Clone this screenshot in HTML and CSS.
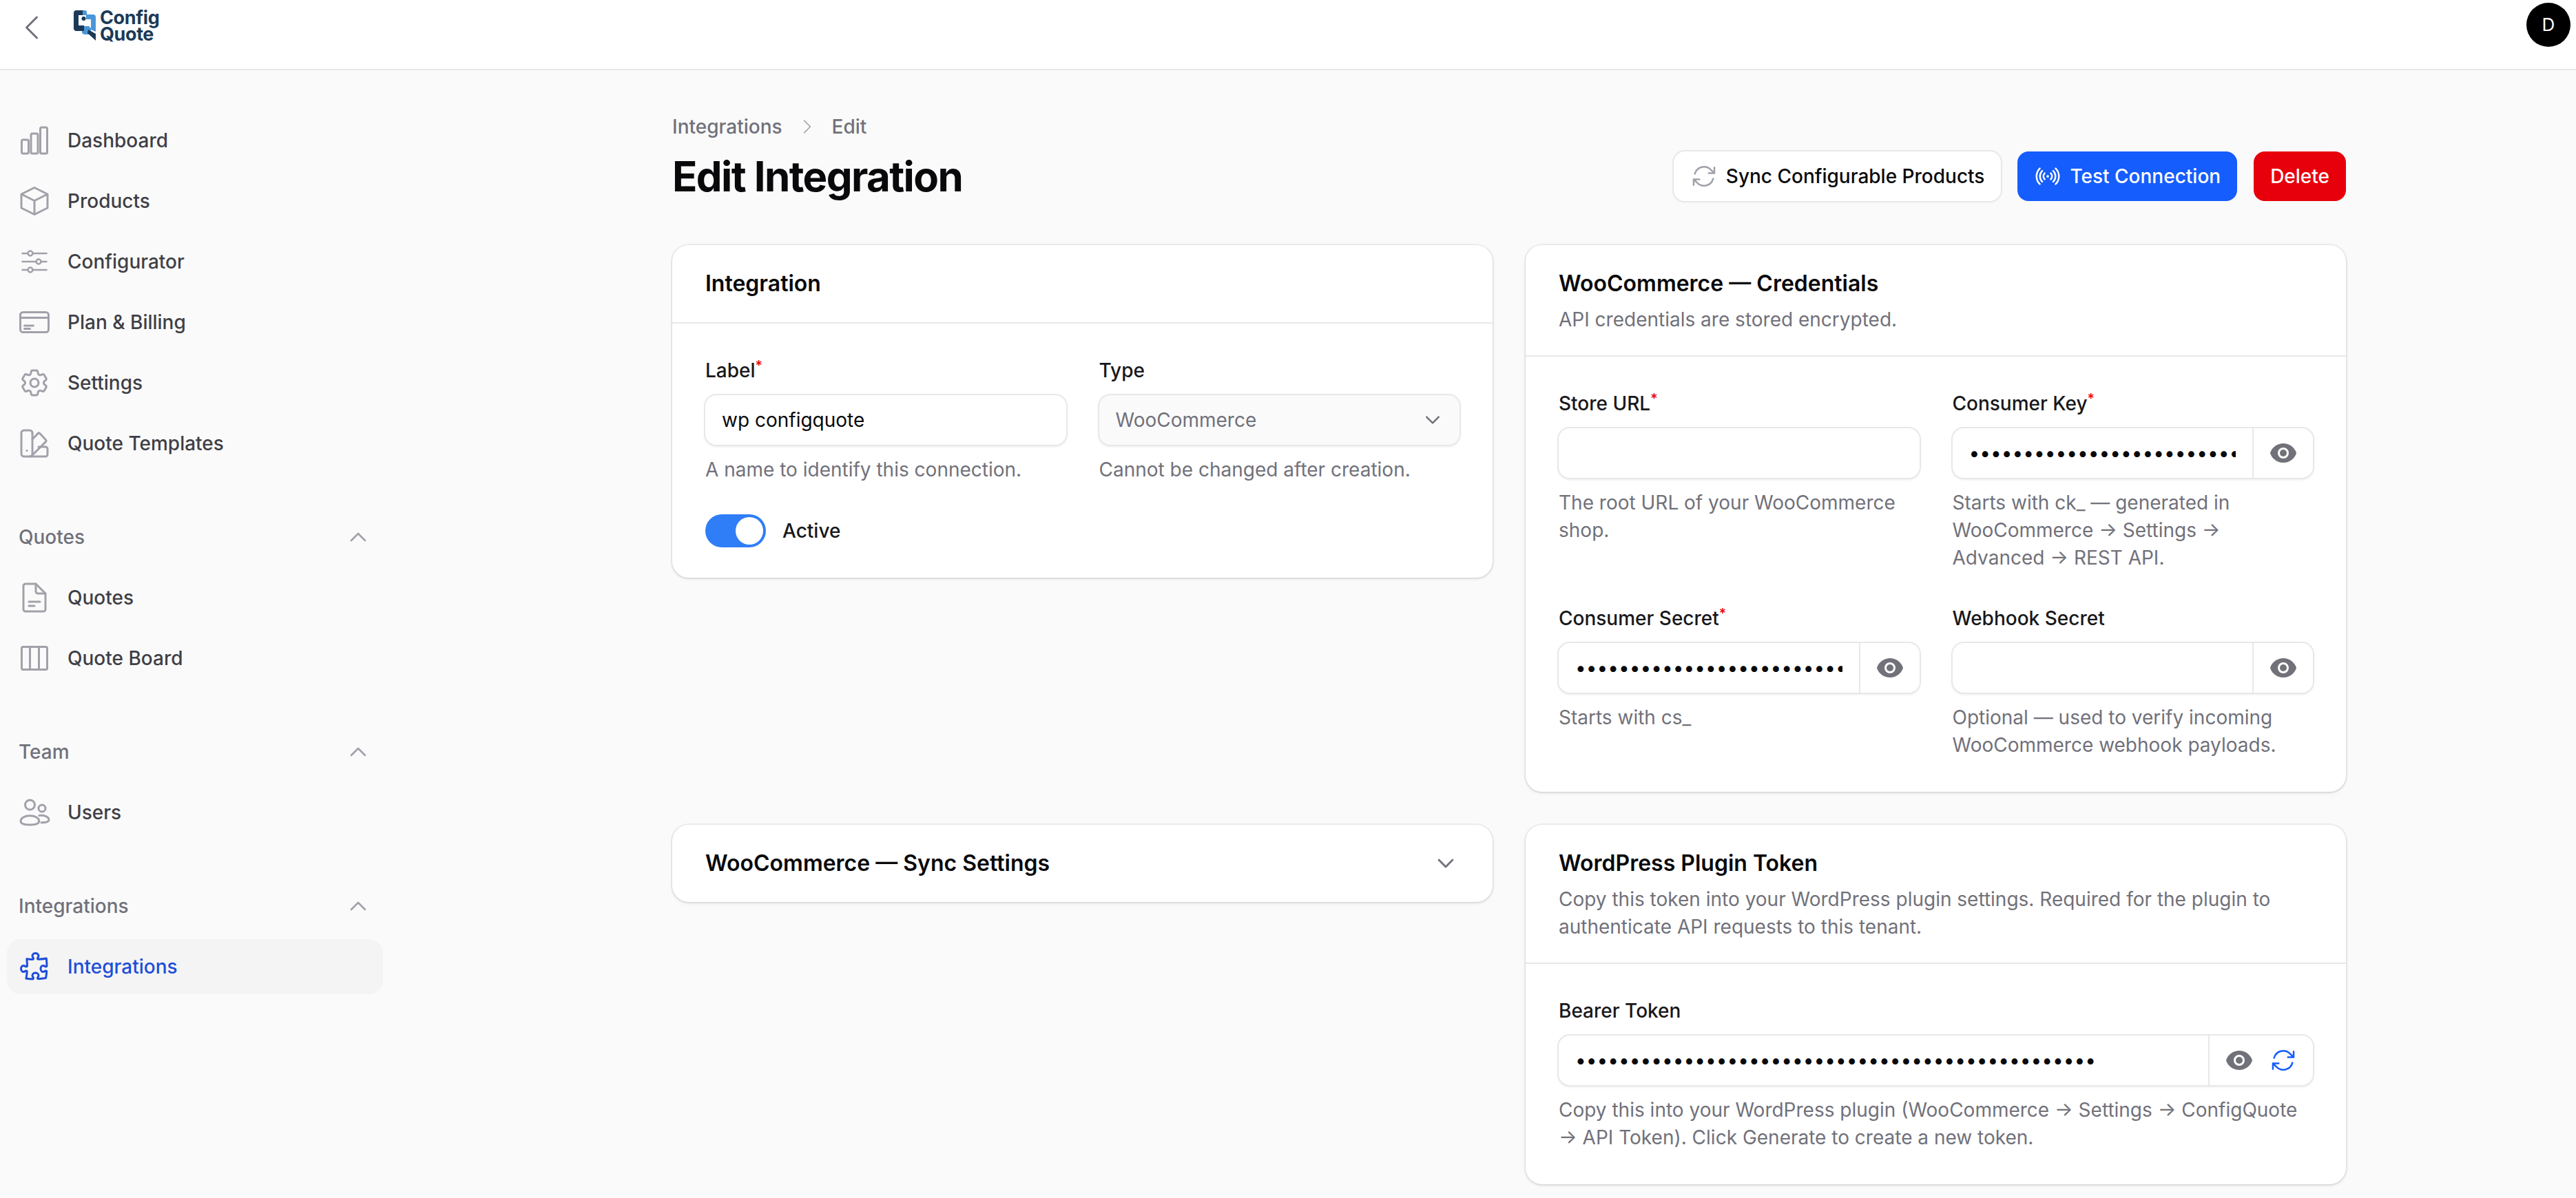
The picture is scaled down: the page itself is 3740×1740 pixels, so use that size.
FILE: index.html
```html
<!DOCTYPE html>
<html lang="en">
<head>
    <meta charset="UTF-8">
    <meta name="viewport" content="width=device-width, initial-scale=1.0">
    <title>Edit Integration</title>
    <link rel="stylesheet" href="styles.css">
</head>
<body>
    <svg class="defs" width="0" height="0">
        <symbol id="eye" viewBox="0 0 20 20">
            <path d="M10 12.5a2.5 2.5 0 1 0 0-5 2.5 2.5 0 0 0 0 5Z"/>
            <path fill-rule="evenodd" d="M.664 10.59a1.651 1.651 0 0 1 0-1.186A10.004 10.004 0 0 1 10 3c4.257 0 7.893 2.66 9.336 6.41.147.381.146.804 0 1.186A10.004 10.004 0 0 1 10 17c-4.257 0-7.893-2.66-9.336-6.41ZM14 10a4 4 0 1 1-8 0 4 4 0 0 1 8 0Z"/>
        </symbol>
        <symbol id="chevron-up" viewBox="0 0 24 24">
            <path d="m4.5 15.75 7.5-7.5 7.5 7.5" fill="none" stroke="currentColor" stroke-width="2" stroke-linecap="round" stroke-linejoin="round"/>
        </symbol>
        <symbol id="chevron-down" viewBox="0 0 24 24">
            <path d="m5 8.5 7 7 7-7" fill="none" stroke="currentColor" stroke-width="2" stroke-linecap="round" stroke-linejoin="round"/>
        </symbol>
        <symbol id="arrow-path" viewBox="0 0 24 24">
            <path d="M16.023 9.348h4.992v-.001M2.985 19.644v-4.992m0 0h4.992m-4.993 0 3.181 3.183a8.25 8.25 0 0 0 13.803-3.7M4.031 9.865a8.25 8.25 0 0 1 13.803-3.7l3.181 3.182m0-4.991v4.99" fill="none" stroke="currentColor" stroke-width="1.5" stroke-linecap="round" stroke-linejoin="round"/>
        </symbol>
    </svg>

    <header class="topbar">
        <div class="topbar-left">
            <svg class="back-icon" viewBox="0 0 24 24" fill="none" stroke="currentColor" stroke-width="1.5" stroke-linecap="round" stroke-linejoin="round"><path d="M15.75 19.5 8.25 12l7.5-7.5"/></svg>
            <div class="logo">
                <svg class="logo-mark" viewBox="0 0 34 46">
                    <path fill="#4a96d9" d="M13 1h4a3 3 0 0 1 3 3v3h9a4 4 0 0 1 4 4v21l-7-3V14H19V8h-6z"/>
                    <path fill="#4a96d9" d="M13 24h10l3 3v9H17a4 4 0 0 1-4-4z"/>
                    <path fill="#1b3a57" d="M5 1h9v7H8v15h8v8H5a4 4 0 0 1-4-4V5a4 4 0 0 1 4-4Z"/>
                    <circle fill="#1b3a57" cx="15.5" cy="13" r="3"/>
                    <path fill="#1b3a57" d="M22 29 33 35v10L21 34z"/>
                </svg>
                <div class="logo-text">Config<br>Quote</div>
            </div>
        </div>
        <div class="avatar">D</div>
    </header>

    <div class="layout">
        <aside class="sidebar">
            <nav class="nav-group">
                <a class="nav-item">
                    <svg class="nav-icon" viewBox="0 0 24 24" fill="none" stroke="currentColor" stroke-width="1.5" stroke-linejoin="round"><rect x="2.75" y="11.5" width="5" height="10" rx="1"/><rect x="9.5" y="7" width="5" height="14.5" rx="1"/><rect x="16.25" y="2.5" width="5" height="19" rx="1"/></svg>
                    Dashboard
                </a>
                <a class="nav-item">
                    <svg class="nav-icon" viewBox="0 0 24 24" fill="none" stroke="currentColor" stroke-width="1.5" stroke-linejoin="round"><path d="M12 2.25 21.5 7v10L12 21.75 2.5 17V7Z"/><path d="m2.5 7 9.5 4.75L21.5 7M12 11.75v10"/></svg>
                    Products
                </a>
                <a class="nav-item">
                    <svg class="nav-icon" viewBox="0 0 24 24" fill="none" stroke="currentColor" stroke-width="1.25" stroke-linecap="round"><path d="M3.25 6h4M10.75 6h10M3.25 12h10M16.75 12h4M3.25 18h4M10.75 18h10"/><circle cx="9" cy="6" r="1.7"/><circle cx="15" cy="12" r="1.7"/><circle cx="9" cy="18" r="1.7"/></svg>
                    Configurator
                </a>
                <a class="nav-item">
                    <svg class="nav-icon" viewBox="0 0 24 24" fill="none" stroke="currentColor" stroke-width="1.5" stroke-linecap="round" stroke-linejoin="round"><rect x="1.75" y="4.75" width="20.5" height="14.5" rx="2"/><path d="M1.75 8.75h20.5M4.75 14.5h6.5M4.75 16.75h4"/></svg>
                    Plan &amp; Billing
                </a>
                <a class="nav-item">
                    <svg class="nav-icon" viewBox="0 0 24 24" fill="none" stroke="currentColor" stroke-width="1.5" stroke-linecap="round" stroke-linejoin="round"><path d="M9.594 3.94c.09-.542.56-.94 1.11-.94h2.593c.55 0 1.02.398 1.11.94l.213 1.281c.063.374.313.686.645.87.074.04.147.083.22.127.325.196.72.257 1.075.124l1.217-.456a1.125 1.125 0 0 1 1.37.49l1.296 2.247a1.125 1.125 0 0 1-.26 1.431l-1.003.827c-.293.241-.438.613-.43.992a7.723 7.723 0 0 1 0 .255c-.008.378.137.75.43.991l1.004.827c.424.35.534.955.26 1.43l-1.298 2.247a1.125 1.125 0 0 1-1.369.491l-1.217-.456c-.355-.133-.75-.072-1.076.124a6.47 6.47 0 0 1-.22.128c-.331.183-.581.495-.644.869l-.213 1.281c-.09.543-.56.94-1.11.94h-2.594c-.55 0-1.019-.398-1.11-.94l-.213-1.281c-.062-.374-.312-.686-.644-.87a6.52 6.52 0 0 1-.22-.127c-.325-.196-.72-.257-1.076-.124l-1.217.456a1.125 1.125 0 0 1-1.369-.49l-1.297-2.247a1.125 1.125 0 0 1 .26-1.431l1.004-.827c.292-.24.437-.613.43-.991a6.932 6.932 0 0 1 0-.255c.007-.38-.138-.751-.43-.992l-1.004-.827a1.125 1.125 0 0 1-.26-1.43l1.297-2.247a1.125 1.125 0 0 1 1.37-.491l1.216.456c.356.133.751.072 1.076-.124.072-.044.146-.086.22-.128.332-.183.582-.495.644-.869l.214-1.28Z"/><path d="M15 12a3 3 0 1 1-6 0 3 3 0 0 1 6 0Z"/></svg>
                    Settings
                </a>
                <a class="nav-item">
                    <svg class="nav-icon" viewBox="0 0 24 24" fill="none" stroke="currentColor" stroke-width="1.5" stroke-linecap="round" stroke-linejoin="round"><path d="M10.5 4.5a2 2 0 0 0-2-2h-4a2 2 0 0 0-2 2v15a2 2 0 0 0 2 2H20a1.5 1.5 0 0 0 1.5-1.5v-4a1.5 1.5 0 0 0-1.5-1.5h-5"/><path d="M10.5 4.5v15a2 2 0 0 1-2 2"/><path d="m10.5 9 4-4.2a1 1 0 0 1 1.4 0l4.3 4.6a1 1 0 0 1 0 1.4L10 21"/><path d="M6.5 17.2h.01"/></svg>
                    Quote Templates
                </a>
            </nav>

            <nav class="nav-group">
                <div class="nav-label">Quotes <svg class="label-chevron"><use href="#chevron-up"/></svg></div>
                <a class="nav-item">
                    <svg class="nav-icon" viewBox="0 0 24 24" fill="none" stroke="currentColor" stroke-width="1.5" stroke-linecap="round" stroke-linejoin="round"><path d="M13 2H5.5A1.5 1.5 0 0 0 4 3.5v17A1.5 1.5 0 0 0 5.5 22h13a1.5 1.5 0 0 0 1.5-1.5V9Z"/><path d="M13 2v5.5A1.5 1.5 0 0 0 14.5 9H20M8 15h8M8 18h4"/></svg>
                    Quotes
                </a>
                <a class="nav-item">
                    <svg class="nav-icon" viewBox="0 0 24 24" fill="none" stroke="currentColor" stroke-width="1.5" stroke-linejoin="round"><rect x="2.75" y="3.75" width="18.5" height="16.5" rx="1"/><path d="M8.75 3.75v16.5M15.25 3.75v16.5"/></svg>
                    Quote Board
                </a>
            </nav>

            <nav class="nav-group">
                <div class="nav-label">Team <svg class="label-chevron"><use href="#chevron-up"/></svg></div>
                <a class="nav-item">
                    <svg class="nav-icon" viewBox="0 0 24 24" fill="none" stroke="currentColor" stroke-width="1.5" stroke-linecap="round" stroke-linejoin="round"><circle cx="8.75" cy="6.5" r="3.5"/><circle cx="17.5" cy="9" r="2.5"/><path d="M2 18.3c0-2.3 3-3.9 6.7-3.9s6.7 1.6 6.7 3.9-3 2.7-6.7 2.7S2 20.6 2 18.3Z"/><path d="M15.5 14.3c3.5-.6 7 .9 7 3.1 0 1.4-2.2 2-5.5 2"/></svg>
                    Users
                </a>
            </nav>

            <nav class="nav-group">
                <div class="nav-label">Integrations <svg class="label-chevron"><use href="#chevron-up"/></svg></div>
                <a class="nav-item active">
                    <svg class="nav-icon" viewBox="0 0 24 24" fill="none" stroke="currentColor" stroke-width="1.5" stroke-linecap="round" stroke-linejoin="round"><path d="M14.25 6.087c0-.355.186-.676.401-.959.221-.29.349-.634.349-1.003 0-1.036-1.007-1.875-2.25-1.875s-2.25.84-2.25 1.875c0 .369.128.713.349 1.003.215.283.401.604.401.959v0a.64.64 0 0 1-.657.643 48.39 48.39 0 0 1-4.163-.3c.186 1.613.293 3.25.315 4.907a.656.656 0 0 1-.658.663v0c-.355 0-.676-.186-.959-.401a1.647 1.647 0 0 0-1.003-.349c-1.036 0-1.875 1.007-1.875 2.25s.84 2.25 1.875 2.25c.369 0 .713-.128 1.003-.349.283-.215.604-.401.959-.401v0c.31 0 .555.26.532.57a48.039 48.039 0 0 1-.642 5.056c1.518.19 3.058.309 4.616.354a.64.64 0 0 0 .657-.643v0c0-.355-.186-.676-.401-.959a1.647 1.647 0 0 1-.349-1.003c0-1.035 1.008-1.875 2.25-1.875 1.243 0 2.25.84 2.25 1.875 0 .369-.128.713-.349 1.003-.215.283-.4.604-.4.959v0c0 .333.277.599.61.58a48.1 48.1 0 0 0 5.427-.63 48.05 48.05 0 0 0 .582-4.717.532.532 0 0 0-.533-.57v0c-.355 0-.676.186-.959.401-.29.221-.634.349-1.003.349-1.035 0-1.875-1.007-1.875-2.25s.84-2.25 1.875-2.25c.37 0 .713.128 1.003.349.283.215.604.401.96.401v0a.656.656 0 0 0 .658-.663 48.422 48.422 0 0 0-.37-5.36c-1.886.342-3.81.574-5.766.689a.578.578 0 0 1-.61-.58v0Z"/></svg>
                    Integrations
                </a>
            </nav>
        </aside>

        <main class="main">
            <div class="page-head">
                <div>
                    <div class="breadcrumbs">
                        <span>Integrations</span>
                        <svg class="crumb-chevron" viewBox="0 0 24 24" fill="none" stroke="currentColor" stroke-width="1.5" stroke-linecap="round" stroke-linejoin="round"><path d="m8.25 4.5 7.5 7.5-7.5 7.5"/></svg>
                        <span>Edit</span>
                    </div>
                    <h1>Edit Integration</h1>
                </div>
                <div class="actions">
                    <button class="btn btn-white"><svg class="btn-icon grey"><use href="#arrow-path"/></svg>Sync Configurable Products</button>
                    <button class="btn btn-blue">
                        <svg class="btn-icon" viewBox="0 0 24 24" fill="none" stroke="currentColor" stroke-width="1.5" stroke-linecap="round" stroke-linejoin="round"><path d="M9.348 14.652a3.75 3.75 0 0 1 0-5.304m5.304 0a3.75 3.75 0 0 1 0 5.304m-7.425 2.121a6.75 6.75 0 0 1 0-9.546m9.546 0a6.75 6.75 0 0 1 0 9.546M5.106 18.894c-3.808-3.807-3.808-9.98 0-13.788m13.788 0c3.808 3.807 3.808 9.98 0 13.788M12 12h.008v.008H12V12Zm.375 0a.375.375 0 1 1-.75 0 .375.375 0 0 1 .75 0Z"/></svg>
                        Test Connection
                    </button>
                    <button class="btn btn-red">Delete</button>
                </div>
            </div>

            <div class="cards">
                <section class="card">
                    <div class="card-head">
                        <h2>Integration</h2>
                    </div>
                    <div class="card-body card-body-tight">
                        <div class="field-grid">
                            <div class="field">
                                <label>Label<sup>*</sup></label>
                                <div class="input-wrap"><input type="text" value="wp configquote"></div>
                                <p class="help">A name to identify this connection.</p>
                            </div>
                            <div class="field">
                                <label>Type</label>
                                <div class="input-wrap select">
                                    <span>WooCommerce</span>
                                    <svg class="select-chevron"><use href="#chevron-down"/></svg>
                                </div>
                                <p class="help">Cannot be changed after creation.</p>
                            </div>
                        </div>
                        <div class="toggle-row">
                            <span class="toggle"><span class="knob"></span></span>
                            <span class="toggle-label">Active</span>
                        </div>
                    </div>
                </section>

                <section class="card">
                    <div class="card-head">
                        <h2>WooCommerce — Credentials</h2>
                        <p class="sub">API credentials are stored encrypted.</p>
                    </div>
                    <div class="card-body">
                        <div class="field-grid">
                            <div class="field">
                                <label>Store URL<sup>*</sup></label>
                                <div class="input-wrap"><input type="text"></div>
                                <p class="help">The root URL of your WooCommerce shop.</p>
                            </div>
                            <div class="field">
                                <label>Consumer Key<sup>*</sup></label>
                                <div class="input-wrap">
                                    <input type="password" value="ck_0000000000000000000000000000000000000000">
                                    <div class="suffix"><svg class="eye"><use href="#eye"/></svg></div>
                                </div>
                                <p class="help">Starts with ck_ — generated in WooCommerce → Settings → Advanced → REST API.</p>
                            </div>
                            <div class="field">
                                <label>Consumer Secret<sup>*</sup></label>
                                <div class="input-wrap">
                                    <input type="password" value="cs_0000000000000000000000000000000000000000">
                                    <div class="suffix"><svg class="eye"><use href="#eye"/></svg></div>
                                </div>
                                <p class="help">Starts with cs_</p>
                            </div>
                            <div class="field">
                                <label>Webhook Secret</label>
                                <div class="input-wrap">
                                    <input type="password">
                                    <div class="suffix"><svg class="eye"><use href="#eye"/></svg></div>
                                </div>
                                <p class="help">Optional — used to verify incoming WooCommerce webhook payloads.</p>
                            </div>
                        </div>
                    </div>
                </section>

                <section class="card">
                    <div class="card-head collapsed">
                        <h2>WooCommerce — Sync Settings</h2>
                        <svg class="collapse-chevron"><use href="#chevron-down"/></svg>
                    </div>
                </section>

                <section class="card">
                    <div class="card-head">
                        <h2>WordPress Plugin Token</h2>
                        <p class="sub">Copy this token into your WordPress plugin settings. Required for the plugin to authenticate API requests to this tenant.</p>
                    </div>
                    <div class="card-body">
                        <div class="field">
                            <label>Bearer Token</label>
                            <div class="input-wrap">
                                <input type="password" value="000000000000000000000000000000000000000000000000">
                                <div class="suffix suffix-wide">
                                    <svg class="eye"><use href="#eye"/></svg>
                                    <svg class="regen"><use href="#arrow-path"/></svg>
                                </div>
                            </div>
                            <p class="help">Copy this into your WordPress plugin (WooCommerce → Settings → ConfigQuote → API Token). Click Generate to create a new token.</p>
                        </div>
                    </div>
                </section>
            </div>
        </main>
    </div>
</body>
</html>
```

FILE: styles.css
```css
* {
    box-sizing: border-box;
}

html,
body {
    height: 100%;
}

body {
    margin: 0;
    overflow: hidden;
    background-color: #fafafa;
    color: #09090b;
    font-family: Inter, 'Noto Sans', sans-serif;
    font-size: 28px;
    line-height: 40px;
}

.defs {
    position: absolute;
}

/* top bar */
.topbar {
    display: flex;
    justify-content: space-between;
    height: 102px;
    padding: 4px 8px 0 22px;
    background: #fff;
    border-bottom: 2px solid #e7e7e9;
}

.topbar-left {
    display: flex;
    align-items: flex-start;
}

.back-icon {
    width: 48px;
    height: 48px;
    margin-top: 12px;
    color: #71717a;
}

.logo {
    display: flex;
    gap: 5px;
    margin: 10px 0 0 36px;
}

.logo-mark {
    width: 34px;
    height: 46px;
}

.logo-text {
    color: #1b3a57;
    font-size: 27px;
    font-weight: 700;
    line-height: 24px;
    letter-spacing: -0.4px;
}

.avatar {
    display: flex;
    align-items: center;
    justify-content: center;
    width: 64px;
    height: 64px;
    border-radius: 50%;
    background: #000;
    color: #fff;
    font-size: 26px;
}

/* sidebar */
.layout {
    display: flex;
}

.sidebar {
    flex: none;
    display: flex;
    flex-direction: column;
    gap: 56px;
    width: 642px;
    padding: 62px 86px 0 10px;
}

.nav-group {
    display: flex;
    flex-direction: column;
    gap: 8px;
}

.nav-item {
    display: flex;
    align-items: center;
    gap: 24px;
    height: 80px;
    padding: 0 16px;
    border-radius: 20px;
    color: #3f3f46;
    font-weight: 500;
}

.nav-item.active {
    background: #f4f4f5;
    color: #1d4ed8;
}

.nav-icon {
    flex: none;
    width: 48px;
    height: 48px;
    color: #a1a1aa;
}

.active .nav-icon {
    color: #1d4ed8;
}

.nav-label {
    display: flex;
    align-items: center;
    justify-content: space-between;
    height: 80px;
    padding: 0 20px 0 17px;
    color: #71717a;
    font-weight: 500;
}

.label-chevron {
    width: 32px;
    height: 32px;
    color: #a1a1aa;
}

/* page */
.main {
    flex: 1;
    min-width: 0;
    padding-top: 62px;
}

.page-head,
.cards {
    max-width: 2430px;
    margin: 0 auto;
}

.page-head {
    display: flex;
    align-items: flex-end;
    justify-content: space-between;
    margin-bottom: 64px;
}

.breadcrumbs {
    display: flex;
    align-items: center;
    gap: 22px;
    color: #71717a;
    font-weight: 500;
}

.crumb-chevron {
    width: 28px;
    height: 28px;
    color: #a1a1aa;
}

h1 {
    margin: 16px 0 0;
    font-size: 60px;
    font-weight: 700;
    line-height: 72px;
    letter-spacing: -1.6px;
}

.actions {
    display: flex;
    gap: 24px;
}

.btn {
    display: flex;
    align-items: center;
    gap: 12px;
    height: 72px;
    padding: 0 24px;
    border: 0;
    border-radius: 16px;
    font-family: inherit;
    font-size: 28px;
    font-weight: 500;
}

.btn-icon {
    width: 40px;
    height: 40px;
}

.btn-icon.grey {
    color: #a1a1aa;
}

.btn-white {
    background: #fff;
    box-shadow: 0 0 0 2px #e8e8ea, 0 2px 4px rgba(0, 0, 0, 0.04);
    color: #09090b;
}

.btn-blue {
    background: #155dfc;
    color: #fff;
}

.btn-red {
    background: #e7000b;
    color: #fff;
}

/* cards */
.cards {
    display: grid;
    grid-template-columns: minmax(0, 1fr) minmax(0, 1fr);
    gap: 48px;
    align-items: start;
}

.card {
    background: #fff;
    border-radius: 24px;
    box-shadow: 0 0 0 2px rgba(0, 0, 0, 0.05), 0 2px 4px rgba(0, 0, 0, 0.1);
}

.card-head {
    padding: 32px 48px;
}

.card-head.collapsed {
    display: flex;
    align-items: center;
    justify-content: space-between;
}

h2 {
    margin: 0;
    font-size: 32px;
    font-weight: 600;
    line-height: 48px;
}

.sub {
    margin: 8px 0 0;
    color: #71717a;
}

.card-body {
    padding: 48px;
    border-top: 2px solid #e8e8ea;
}

.card-body-tight {
    padding-bottom: 44px;
}

.field-grid {
    display: grid;
    grid-template-columns: minmax(0, 1fr) minmax(0, 1fr);
    gap: 48px;
}

.field label {
    display: block;
    color: #18181b;
    font-weight: 500;
}

sup {
    color: #e7000b;
    font-size: 20px;
    line-height: 0;
}

.input-wrap {
    display: flex;
    align-items: center;
    height: 72px;
    margin-top: 16px;
    border-radius: 16px;
    background: #fff;
    box-shadow: 0 0 0 2px #e8e8ea, 0 2px 4px rgba(0, 0, 0, 0.12);
}

input {
    flex: 1;
    min-width: 0;
    height: 100%;
    padding: 0 24px;
    border: 0;
    outline: 0;
    background: transparent;
    color: #09090b;
    font-family: inherit;
    font-size: 28px;
}

.select {
    justify-content: space-between;
    padding: 0 24px;
    background: #fafafa;
    color: #71717a;
}

.select-chevron {
    width: 30px;
    height: 30px;
    color: #71717a;
}

.collapse-chevron {
    width: 34px;
    height: 34px;
    margin-right: 3px;
    color: #71717a;
}

.suffix {
    flex: none;
    display: flex;
    align-items: center;
    justify-content: center;
    gap: 24px;
    width: 88px;
    height: 100%;
    border-left: 2px solid #e8e8ea;
}

.suffix-wide {
    width: 152px;
}

.eye {
    width: 40px;
    height: 40px;
    fill: #71717a;
}

.regen {
    width: 40px;
    height: 40px;
    color: #155dfc;
}

.help {
    margin: 16px 0 0;
    color: #71717a;
}

.toggle-row {
    display: flex;
    align-items: center;
    gap: 24px;
    margin-top: 45px;
}

.toggle {
    display: flex;
    justify-content: flex-end;
    align-items: center;
    width: 88px;
    height: 48px;
    padding: 4px;
    border-radius: 24px;
    background: #2f7ef7;
}

.knob {
    width: 40px;
    height: 40px;
    border-radius: 50%;
    background: #fff;
}

.toggle-label {
    color: #18181b;
    font-weight: 500;
}
```
